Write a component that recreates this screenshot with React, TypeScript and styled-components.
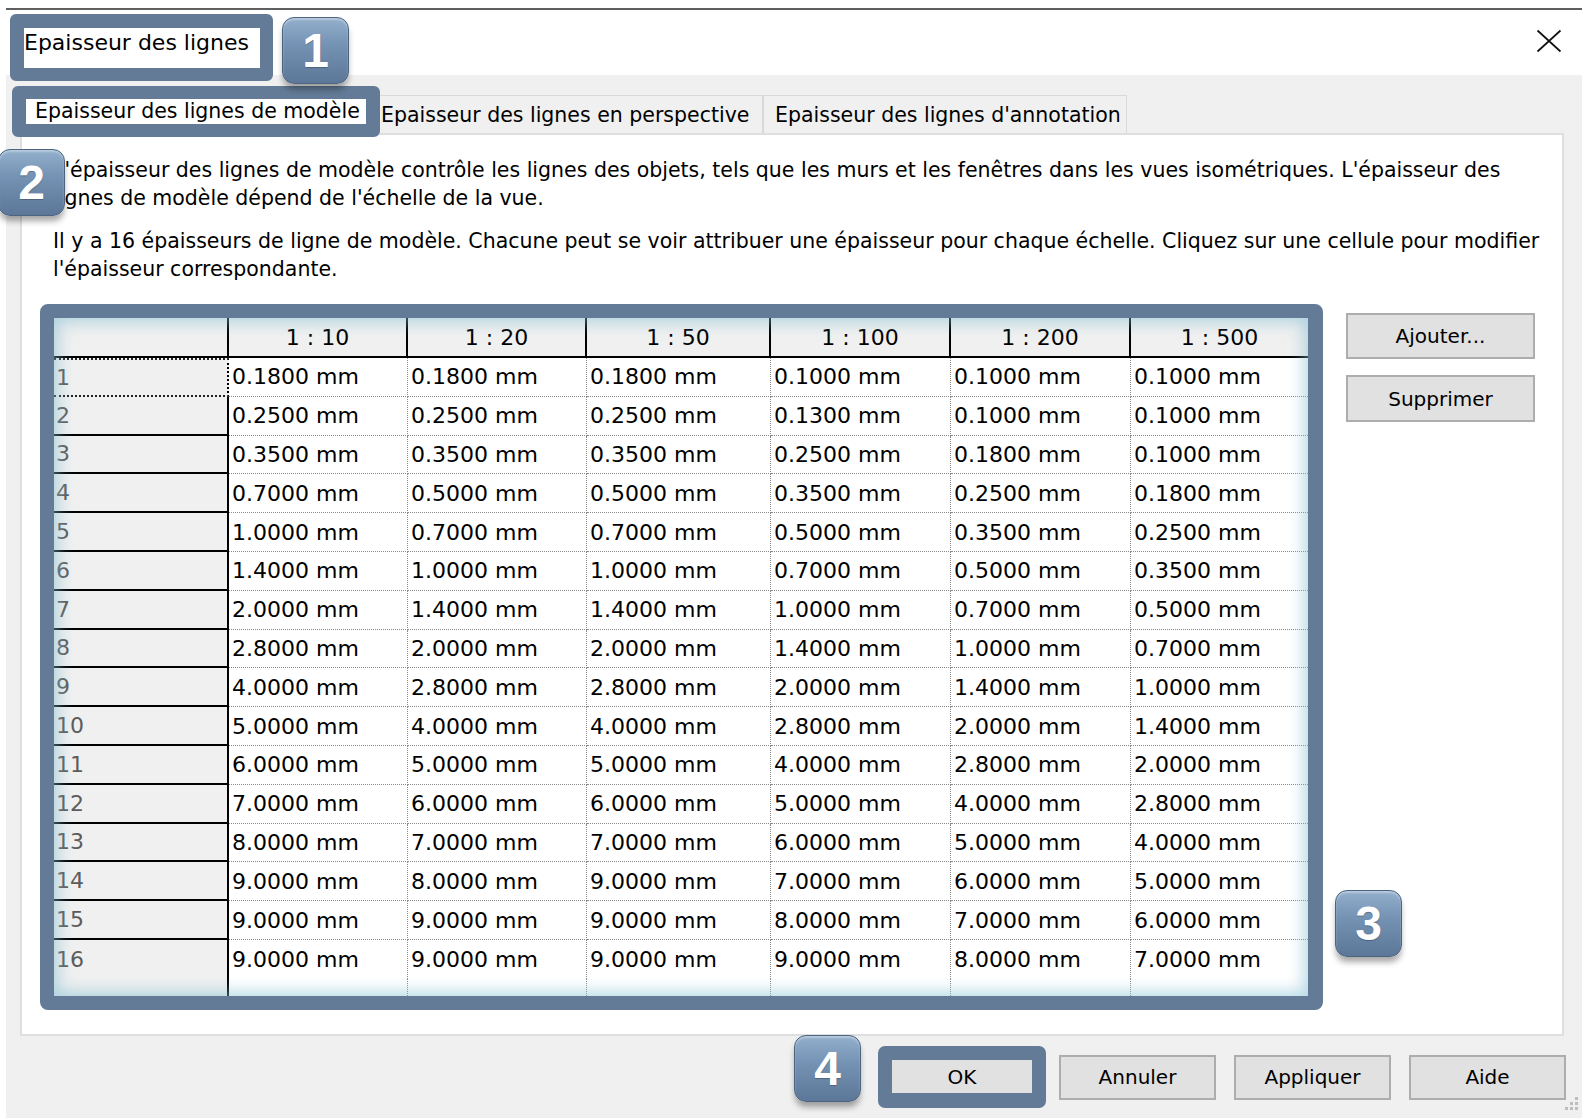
import React from "react";
import styled, { createGlobalStyle } from "styled-components";

const SLATE = "#637b96";
const UI_FONT = `"DejaVu Sans", "Liberation Sans", sans-serif`;

const GlobalStyle = createGlobalStyle`
  html, body { margin: 0; padding: 0; background: #fff; }
  body { font-family: ${UI_FONT}; }
  #root { width: 1588px; height: 1118px; }
`;

const Page = styled.div`
  position: relative;
  width: 1588px;
  height: 1118px;
  overflow: hidden;
  background: #fff;
  font-family: ${UI_FONT};
  color: #000;
`;

const TopRule = styled.div`
  margin: 8px 6px 0;
  height: 2px;
  background: #5f5f5f;
`;

const Window = styled.div`
  position: relative;
  margin: 0 6px;
  height: 1108px;
  display: flex;
  flex-direction: column;
`;

const TitleBar = styled.div`
  height: 65px;
  flex: none;
  box-sizing: border-box;
  display: flex;
  align-items: flex-start;
  padding: 4px 20px 0 4px;
  background: #fff;
`;

const TitleHighlight = styled.div`
  position: relative;
  z-index: 2;
  flex: none;
  width: 236px;
  height: 40px;
  border-style: solid;
  border-color: ${SLATE};
  border-width: 14px 13px 13px 14px;
  border-radius: 6px;
  background: #fff;
  font-size: 22px;
  line-height: 30px;
  white-space: nowrap;
`;

const CloseButton = styled.div`
  margin-left: auto;
  margin-top: 15px;
  width: 26px;
  height: 24px;
  display: flex;
`;

const Body = styled.div`
  flex: 1;
  background: #f0f0f0;
  display: flex;
  flex-direction: column;
`;

const TabStrip = styled.div`
  height: 58px;
  flex: none;
  display: flex;
  align-items: flex-start;
  padding-left: 6px;
`;

const ActiveTab = styled.div`
  position: relative;
  z-index: 2;
  flex: none;
  margin-top: 11px;
  width: 331px;
  height: 25px;
  padding-left: 9px;
  border: 13px solid ${SLATE};
  border-left-width: 14px;
  border-right-width: 14px;
  border-radius: 6px;
  background: #fff;
  font-size: 20.5px;
  line-height: 25px;
  white-space: nowrap;
`;

const Tab = styled.div<{ $width: number; $pad: number; $noLeft?: boolean }>`
  flex: none;
  box-sizing: border-box;
  margin-top: 20px;
  width: ${(p) => p.$width}px;
  height: 38px;
  padding-left: ${(p) => p.$pad}px;
  border: 1px solid #d9d9d9;
  border-bottom: none;
  ${(p) => (p.$noLeft ? "border-left: none;" : "")}
  background: #f0f0f0;
  font-size: 20.5px;
  line-height: 39px;
  white-space: nowrap;
`;

const Panel = styled.div`
  flex: none;
  box-sizing: border-box;
  margin: 0 18px 0 14px;
  height: 903px;
  border: 2px solid #dfdfdf;
  background: #fff;
  padding: 21px 0 0 18px;
  display: flex;
  flex-direction: column;
`;

const Para = styled.p<{ $gap: number }>`
  margin: 0 0 ${(p) => p.$gap}px 13px;
  font-size: 20.5px;
  line-height: 28px;
  white-space: nowrap;
`;

const TableRow = styled.div`
  display: flex;
  align-items: flex-start;
`;

const Frame = styled.div`
  position: relative;
  flex: none;
  width: 1254px;
  height: 678px;
  border: 14px solid ${SLATE};
  border-right-width: 15px;
  border-radius: 8px;
  background: #fff;
  &::after {
    content: "";
    position: absolute;
    inset: 0;
    pointer-events: none;
    box-shadow: inset 0 0 16px 4px rgba(130, 190, 210, 0.6);
  }
`;

const Grid = styled.div`
  display: grid;
  grid-template-columns: 175px 179px 179px 184px 180px 180px 177px;
  grid-template-rows: 40px repeat(16, 38.8px) 1fr;
  height: 100%;
  font-size: 22px;
`;

const HeaderCell = styled.div<{ $last?: boolean }>`
  box-sizing: border-box;
  background: #f0f0f0;
  border-bottom: 2px solid #000;
  border-right: ${(p) => (p.$last ? "none" : "2px solid #000")};
  display: flex;
  align-items: center;
  justify-content: center;
  white-space: nowrap;
`;

const RowHeader = styled.div<{ $focused?: boolean; $last?: boolean }>`
  box-sizing: border-box;
  background: #f0f0f0;
  color: #5c5c5c;
  padding-left: 2px;
  display: flex;
  align-items: center;
  border-right: 2px ${(p) => (p.$focused ? "dotted" : "solid")} #000;
  border-bottom: ${(p) =>
    p.$last ? "none" : p.$focused ? "2px dotted #222" : "2px solid #000"};
  ${(p) => (p.$focused ? "border-top: 2px dotted #222;" : "")}
`;

const DataCell = styled.div<{ $lastCol?: boolean; $lastRow?: boolean }>`
  box-sizing: border-box;
  padding-left: 3px;
  display: flex;
  align-items: center;
  white-space: nowrap;
  border-right: ${(p) => (p.$lastCol ? "none" : "1px dotted #8a8a8a")};
  border-bottom: ${(p) => (p.$lastRow ? "none" : "1px dotted #8a8a8a")};
`;

const SideButtons = styled.div`
  margin: 9px 0 0 23px;
  display: flex;
  flex-direction: column;
  gap: 16px;
`;

const WinButton = styled.div<{ $w: number; $h: number }>`
  box-sizing: border-box;
  width: ${(p) => p.$w}px;
  height: ${(p) => p.$h}px;
  background: #e1e1e1;
  border: 2px solid #adadad;
  display: flex;
  align-items: center;
  justify-content: center;
  font-size: 20px;
  white-space: nowrap;
`;

const Footer = styled.div`
  display: flex;
  justify-content: flex-end;
  align-items: center;
  height: 62px;
  padding: 10px 16px 0 0;
  gap: 18px;
`;

const OkHighlight = styled.div`
  flex: none;
  margin-right: -5px;
  border: 14px solid ${SLATE};
  border-bottom-width: 15px;
  border-radius: 7px;
  width: 140px;
  height: 33px;
  background: #e1e1e1;
  display: flex;
  align-items: center;
  justify-content: center;
  font-size: 20px;
`;

const Badge = styled.div<{ $left: number; $top: number }>`
  position: absolute;
  z-index: 5;
  left: ${(p) => p.$left}px;
  top: ${(p) => p.$top}px;
  width: 67px;
  height: 67px;
  box-sizing: border-box;
  border-radius: 12px;
  border: 1.5px solid #4d6480;
  background: linear-gradient(180deg, #93afcc 0%, #7593b4 40%, #5c7797 100%);
  box-shadow: 0 6px 6px -1px rgba(0, 0, 0, 0.35), inset 0 2px 2px rgba(255, 255, 255, 0.35);
  color: #fff;
  font-family: "Liberation Sans", Arial, sans-serif;
  font-weight: 700;
  font-size: 48px;
  display: flex;
  align-items: center;
  justify-content: center;
  text-shadow: 0 1px 1px rgba(0, 0, 0, 0.25);
`;

const Grip = styled.div`
  position: absolute;
  right: 2px;
  bottom: 6px;
  width: 16px;
  height: 16px;
  display: flex;
`;

const scales = ["1 : 10", "1 : 20", "1 : 50", "1 : 100", "1 : 200", "1 : 500"];

const rows: string[][] = [
  ["0.1800", "0.1800", "0.1800", "0.1000", "0.1000", "0.1000"],
  ["0.2500", "0.2500", "0.2500", "0.1300", "0.1000", "0.1000"],
  ["0.3500", "0.3500", "0.3500", "0.2500", "0.1800", "0.1000"],
  ["0.7000", "0.5000", "0.5000", "0.3500", "0.2500", "0.1800"],
  ["1.0000", "0.7000", "0.7000", "0.5000", "0.3500", "0.2500"],
  ["1.4000", "1.0000", "1.0000", "0.7000", "0.5000", "0.3500"],
  ["2.0000", "1.4000", "1.4000", "1.0000", "0.7000", "0.5000"],
  ["2.8000", "2.0000", "2.0000", "1.4000", "1.0000", "0.7000"],
  ["4.0000", "2.8000", "2.8000", "2.0000", "1.4000", "1.0000"],
  ["5.0000", "4.0000", "4.0000", "2.8000", "2.0000", "1.4000"],
  ["6.0000", "5.0000", "5.0000", "4.0000", "2.8000", "2.0000"],
  ["7.0000", "6.0000", "6.0000", "5.0000", "4.0000", "2.8000"],
  ["8.0000", "7.0000", "7.0000", "6.0000", "5.0000", "4.0000"],
  ["9.0000", "8.0000", "9.0000", "7.0000", "6.0000", "5.0000"],
  ["9.0000", "9.0000", "9.0000", "8.0000", "7.0000", "6.0000"],
  ["9.0000", "9.0000", "9.0000", "9.0000", "8.0000", "7.0000"],
];

export default function App() {
  return (
    <Page>
      <GlobalStyle />
      <TopRule />
      <Window>
        <TitleBar>
          <TitleHighlight>Epaisseur des lignes</TitleHighlight>
          <CloseButton>
            <svg width="26" height="24" viewBox="0 0 26 24">
              <path d="M1.5 1.5 L24.5 22.5 M24.5 1.5 L1.5 22.5" stroke="#111" strokeWidth="1.7" fill="none" />
            </svg>
          </CloseButton>
        </TitleBar>
        <Body>
          <TabStrip>
            <ActiveTab>Epaisseur des lignes de modèle</ActiveTab>
            <Tab $width={383} $pad={1} $noLeft>
              Epaisseur des lignes en perspective
            </Tab>
            <Tab $width={364} $pad={11}>
              Epaisseur des lignes d'annotation
            </Tab>
          </TabStrip>
          <Panel>
            <Para $gap={15}>
              L'épaisseur des lignes de modèle contrôle les lignes des objets, tels que les murs et les fenêtres dans les vues isométriques. L'épaisseur des
              <br />
              lignes de modèle dépend de l'échelle de la vue.
            </Para>
            <Para $gap={21}>
              Il y a 16 épaisseurs de ligne de modèle. Chacune peut se voir attribuer une épaisseur pour chaque échelle. Cliquez sur une cellule pour modifier
              <br />
              l'épaisseur correspondante.
            </Para>
            <TableRow>
              <Frame>
                <Grid>
                  <HeaderCell />
                  {scales.map((s, i) => (
                    <HeaderCell key={s} $last={i === scales.length - 1}>
                      {s}
                    </HeaderCell>
                  ))}
                  {rows.map((r, ri) => (
                    <React.Fragment key={ri}>
                      <RowHeader $focused={ri === 0} $last={ri === rows.length - 1}>
                        {ri + 1}
                      </RowHeader>
                      {r.map((v, ci) => (
                        <DataCell key={ci} $lastCol={ci === r.length - 1} $lastRow={ri === rows.length - 1}>
                          {v} mm
                        </DataCell>
                      ))}
                    </React.Fragment>
                  ))}
                  <RowHeader $last />
                  {scales.map((s, i) => (
                    <DataCell key={"f" + s} $lastCol={i === scales.length - 1} $lastRow />
                  ))}
                </Grid>
              </Frame>
              <SideButtons>
                <WinButton $w={189} $h={46}>Ajouter...</WinButton>
                <WinButton $w={189} $h={47}>Supprimer</WinButton>
              </SideButtons>
            </TableRow>
          </Panel>
          <Footer>
            <OkHighlight>OK</OkHighlight>
            <WinButton $w={157} $h={45}>Annuler</WinButton>
            <WinButton $w={157} $h={45}>Appliquer</WinButton>
            <WinButton $w={157} $h={45}>Aide</WinButton>
          </Footer>
        </Body>
        <Grip>
          <svg width="16" height="16" viewBox="0 0 16 16">
            <g fill="#bdbdbd">
              <rect x="11" y="1" width="3" height="3" />
              <rect x="6" y="6" width="3" height="3" />
              <rect x="11" y="6" width="3" height="3" />
              <rect x="1" y="11" width="3" height="3" />
              <rect x="6" y="11" width="3" height="3" />
              <rect x="11" y="11" width="3" height="3" />
            </g>
          </svg>
        </Grip>
      </Window>
      <Badge $left={282} $top={17}>1</Badge>
      <Badge $left={-2} $top={149}>2</Badge>
      <Badge $left={1335} $top={890}>3</Badge>
      <Badge $left={794} $top={1035}>4</Badge>
    </Page>
  );
}
